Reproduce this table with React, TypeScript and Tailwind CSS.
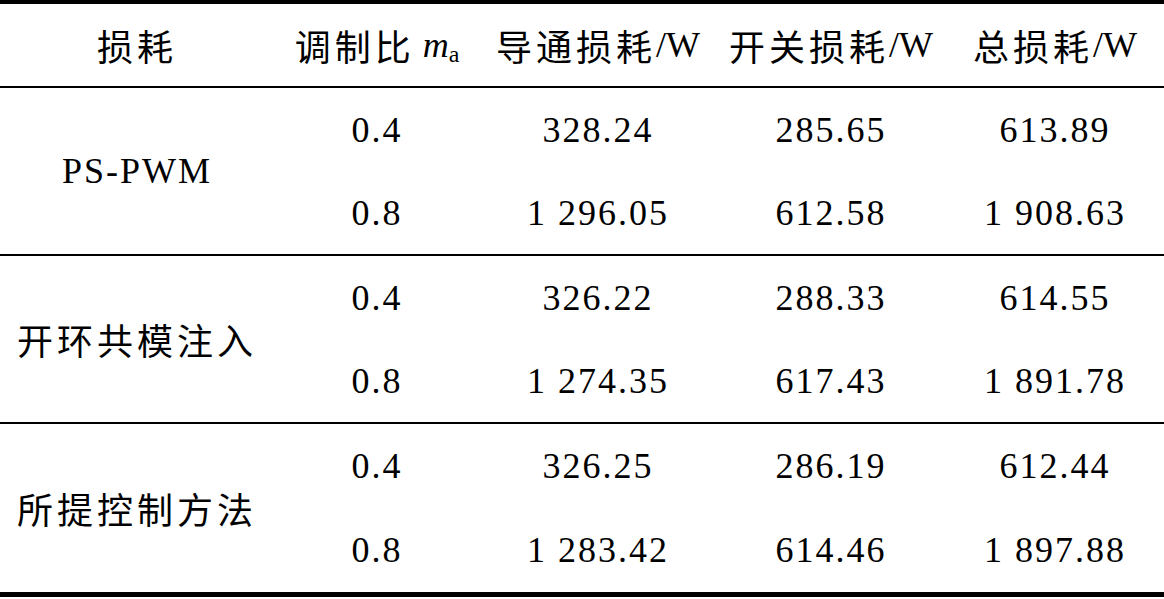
import React from "react";

const cols = "grid grid-cols-[274px_206px_236px_230px_218px]";

type Row = { ma: string; cond: string; sw: string; total: string };
type Group = { name: string; cjk: boolean; rows: Row[] };

const groups: Group[] = [
  {
    name: "PS-PWM",
    cjk: false,
    rows: [
      { ma: "0.4", cond: "328.24", sw: "285.65", total: "613.89" },
      { ma: "0.8", cond: "1 296.05", sw: "612.58", total: "1 908.63" },
    ],
  },
  {
    name: "开环共模注入",
    cjk: true,
    rows: [
      { ma: "0.4", cond: "326.22", sw: "288.33", total: "614.55" },
      { ma: "0.8", cond: "1 274.35", sw: "617.43", total: "1 891.78" },
    ],
  },
  {
    name: "所提控制方法",
    cjk: true,
    rows: [
      { ma: "0.4", cond: "326.25", sw: "286.19", total: "612.44" },
      { ma: "0.8", cond: "1 283.42", sw: "614.46", total: "1 897.88" },
    ],
  },
];

function Cjk({ children }: { children: React.ReactNode }) {
  return (
    <span className="[font-family:Noto_Sans_CJK_SC,sans-serif] text-[36px] tracking-[4px]">
      {children}
    </span>
  );
}

function Num({ children }: { children: React.ReactNode }) {
  return <span className="text-[36px] tracking-[2px]">{children}</span>;
}

export default function App() {
  return (
    <div className="w-[1164px] h-[599px] bg-white text-black [font-family:Liberation_Serif,Noto_Sans_CJK_SC,serif] leading-none">
      {/* header */}
      <div className={`${cols} h-[88px] border-t-4 border-b-2 border-black`}>
        <div className="flex items-center justify-center">
          <Cjk>损耗</Cjk>
        </div>
        <div className="flex items-center justify-center">
          <Cjk>调制比</Cjk>
          <span className="ml-[8px] text-[36px] italic">m</span>
          <span className="text-[24px] relative top-[9px]">a</span>
        </div>
        <div className="flex items-center justify-center">
          <Cjk>导通损耗</Cjk>
          <span className="text-[36px]">/W</span>
        </div>
        <div className="flex items-center justify-center">
          <Cjk>开关损耗</Cjk>
          <span className="text-[36px]">/W</span>
        </div>
        <div className="flex items-center justify-center">
          <Cjk>总损耗</Cjk>
          <span className="text-[36px]">/W</span>
        </div>
      </div>

      {groups.map((g, i) => (
        <div
          key={g.name}
          className={`${cols} grid-rows-2 ${
            i === groups.length - 1 ? "h-[173px] border-b-[5px]" : "h-[168px] border-b-2"
          } border-black`}
        >
          <div className="row-span-2 flex items-center justify-center">
            {g.cjk ? <Cjk>{g.name}</Cjk> : <Num>{g.name}</Num>}
          </div>
          {g.rows.map((r) => (
            <React.Fragment key={r.ma}>
              <div className="flex items-center justify-center">
                <Num>{r.ma}</Num>
              </div>
              <div className="flex items-center justify-center">
                <Num>{r.cond}</Num>
              </div>
              <div className="flex items-center justify-center">
                <Num>{r.sw}</Num>
              </div>
              <div className="flex items-center justify-center">
                <Num>{r.total}</Num>
              </div>
            </React.Fragment>
          ))}
        </div>
      ))}
    </div>
  );
}
